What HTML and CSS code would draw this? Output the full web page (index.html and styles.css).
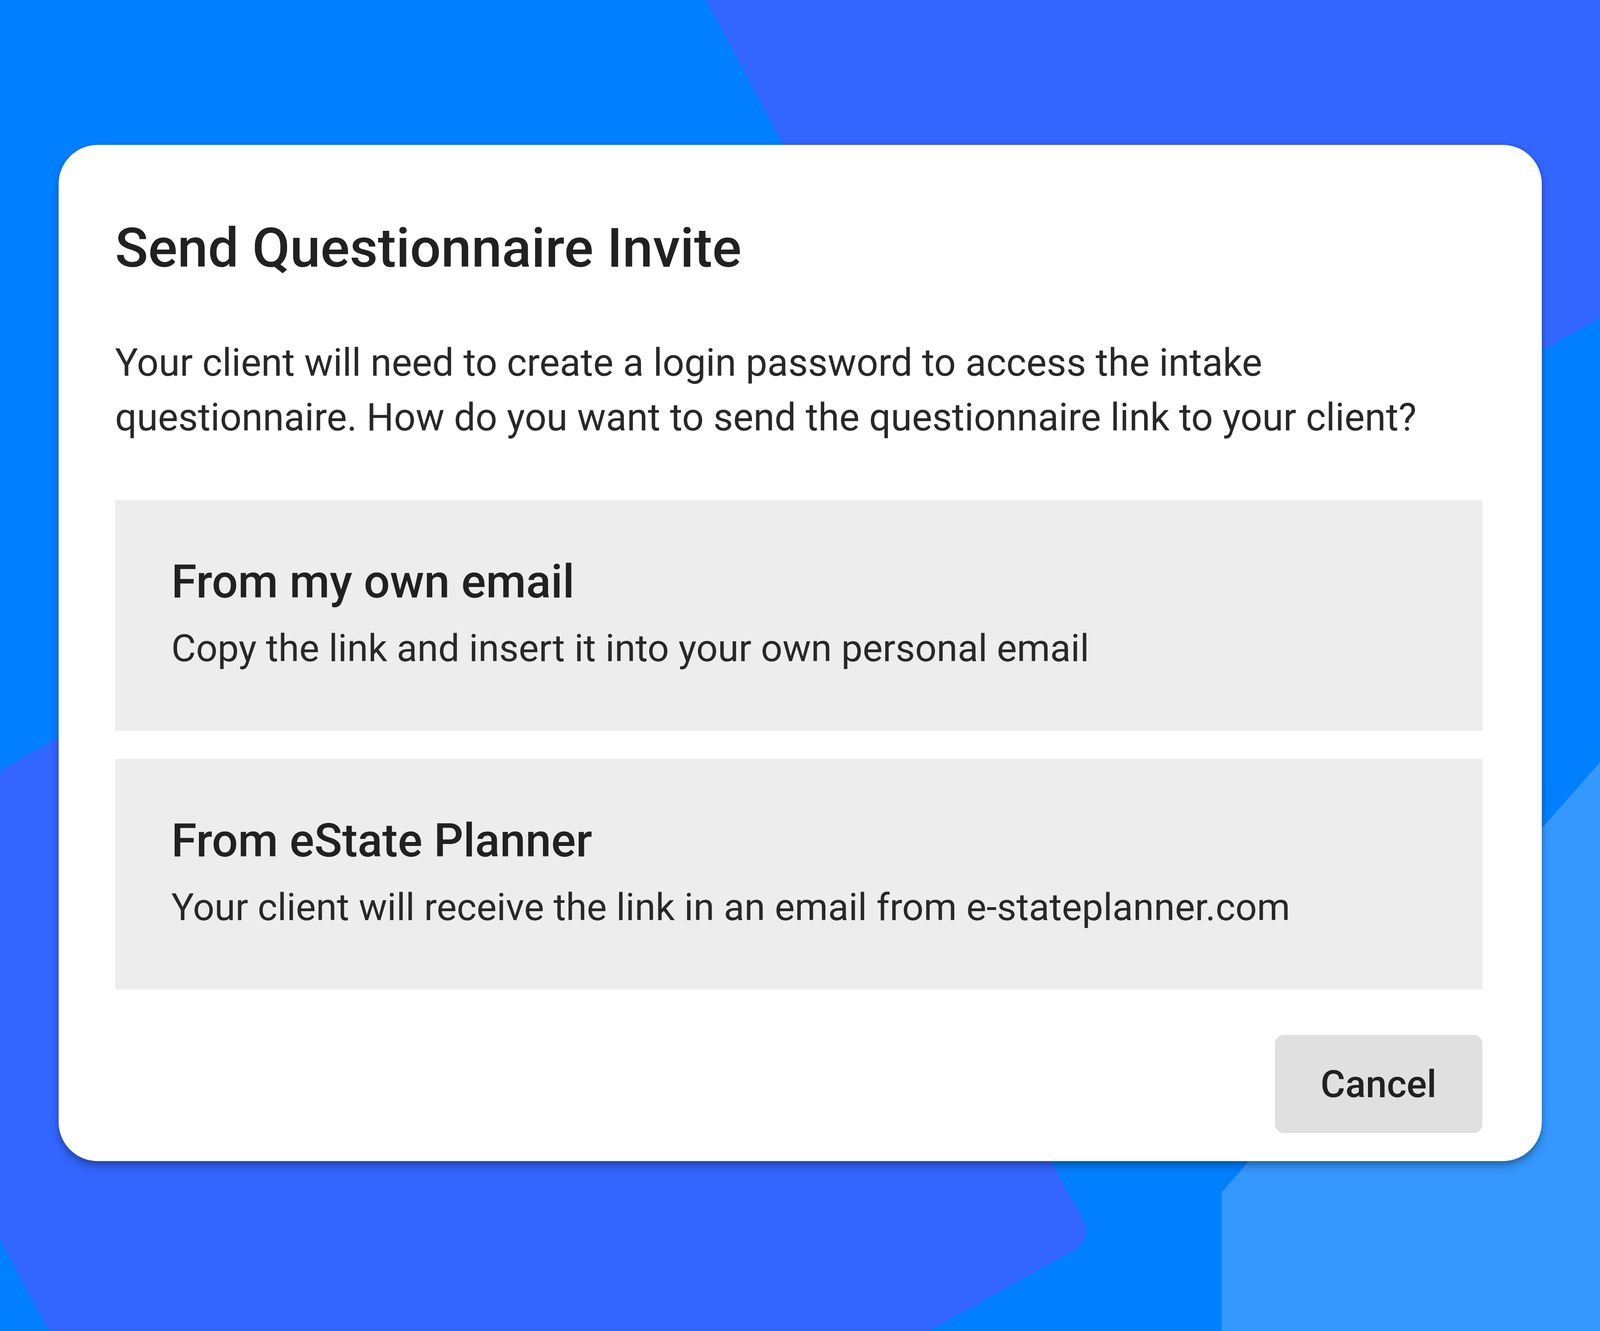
FILE: index.html
```html
<!DOCTYPE html>
<html lang="en">
<head>
    <meta charset="UTF-8">
    <meta name="viewport" content="width=device-width, initial-scale=1.0">
    <title>Send Questionnaire Invite</title>
    <link rel="stylesheet" href="styles.css">
</head>
<body>
    <svg class="backdrop" viewBox="0 0 4880 3408" preserveAspectRatio="none" aria-hidden="true">
        <path class="shape-royal" d="M2154 0 H4880 V815 L4330 1070 L2788 1000 Z"/>
        <path class="shape-royal" d="M0 1974 L600 1687 L3000 2000 L3157 2900 L3306 3125 Q3324 3165 3288 3195 L2835 3408 H148 L0 3173 Z"/>
        <path class="shape-light" d="M4880 1952 L3726 3053 V3408 H4880 Z"/>
    </svg>

    <div class="dialog" role="dialog" aria-labelledby="dialogTitle">
        <h2 class="dialog-title" id="dialogTitle">Send Questionnaire Invite</h2>
        <p class="dialog-text">
            Your client will need to create a login password to access the intake
            questionnaire. How do you want to send the questionnaire link to your client?
        </p>
        <div class="options">
            <div class="option">
                <h3 class="option-title">From my own email</h3>
                <p class="option-desc">Copy the link and insert it into your own personal email</p>
            </div>
            <div class="option">
                <h3 class="option-title">From eState Planner</h3>
                <p class="option-desc">Your client will receive the link in an email from e-stateplanner.com</p>
            </div>
        </div>
        <div class="actions">
            <button class="btn-cancel" type="button">Cancel</button>
        </div>
    </div>
</body>
</html>
```

FILE: styles.css
```css
html,
body {
    margin: 0;
    padding: 0;
    height: 100%;
}
body {
    position: relative;
    overflow: hidden;
    display: flex;
    justify-content: center;
    align-items: flex-start;
    padding-top: 371px;
    box-sizing: border-box;
    background: #0080ff;
    font-family: Roboto, "Noto Sans", Arial, sans-serif;
    color: #212121;
}
.backdrop {
    position: absolute;
    top: 0;
    left: 0;
    width: 100%;
    height: 100%;
}
.shape-royal {
    fill: #3366ff;
}
.shape-light {
    fill: #3598ff;
}
.dialog {
    position: relative;
    width: 3797px;
    flex-shrink: 0;
    box-sizing: border-box;
    padding: 183px 152px 72px 145px;
    background: #fff;
    border-radius: 100px;
    box-shadow: 0 14px 24px -4px rgba(0, 0, 0, 0.35), 0 0 14px rgba(0, 0, 0, 0.12);
}
.dialog-title {
    margin: 0;
    font-size: 140px;
    font-weight: 500;
    line-height: 162px;
    color: #212121;
}
.dialog-text {
    margin: 143px 0 0;
    font-size: 98px;
    line-height: 140px;
    color: #282828;
}
.options {
    margin-top: 141px;
    display: flex;
    flex-direction: column;
    gap: 72px;
}
.option {
    background: #ededed;
    padding: 141px 144px;
    cursor: pointer;
}
.option-title {
    margin: 0;
    font-size: 118px;
    font-weight: 500;
    line-height: 138px;
    color: #212121;
}
.option-desc {
    margin: 31px 0 0;
    font-size: 97px;
    line-height: 140px;
    color: #282828;
}
.actions {
    display: flex;
    justify-content: flex-end;
    margin-top: 116px;
}
.btn-cancel {
    height: 251px;
    padding: 0 117px;
    border: 0;
    border-radius: 22px;
    background: #e0e0e0;
    font-family: Roboto, "Noto Sans", Arial, sans-serif;
    font-size: 97px;
    font-weight: 500;
    color: #212121;
    cursor: pointer;
}
```
